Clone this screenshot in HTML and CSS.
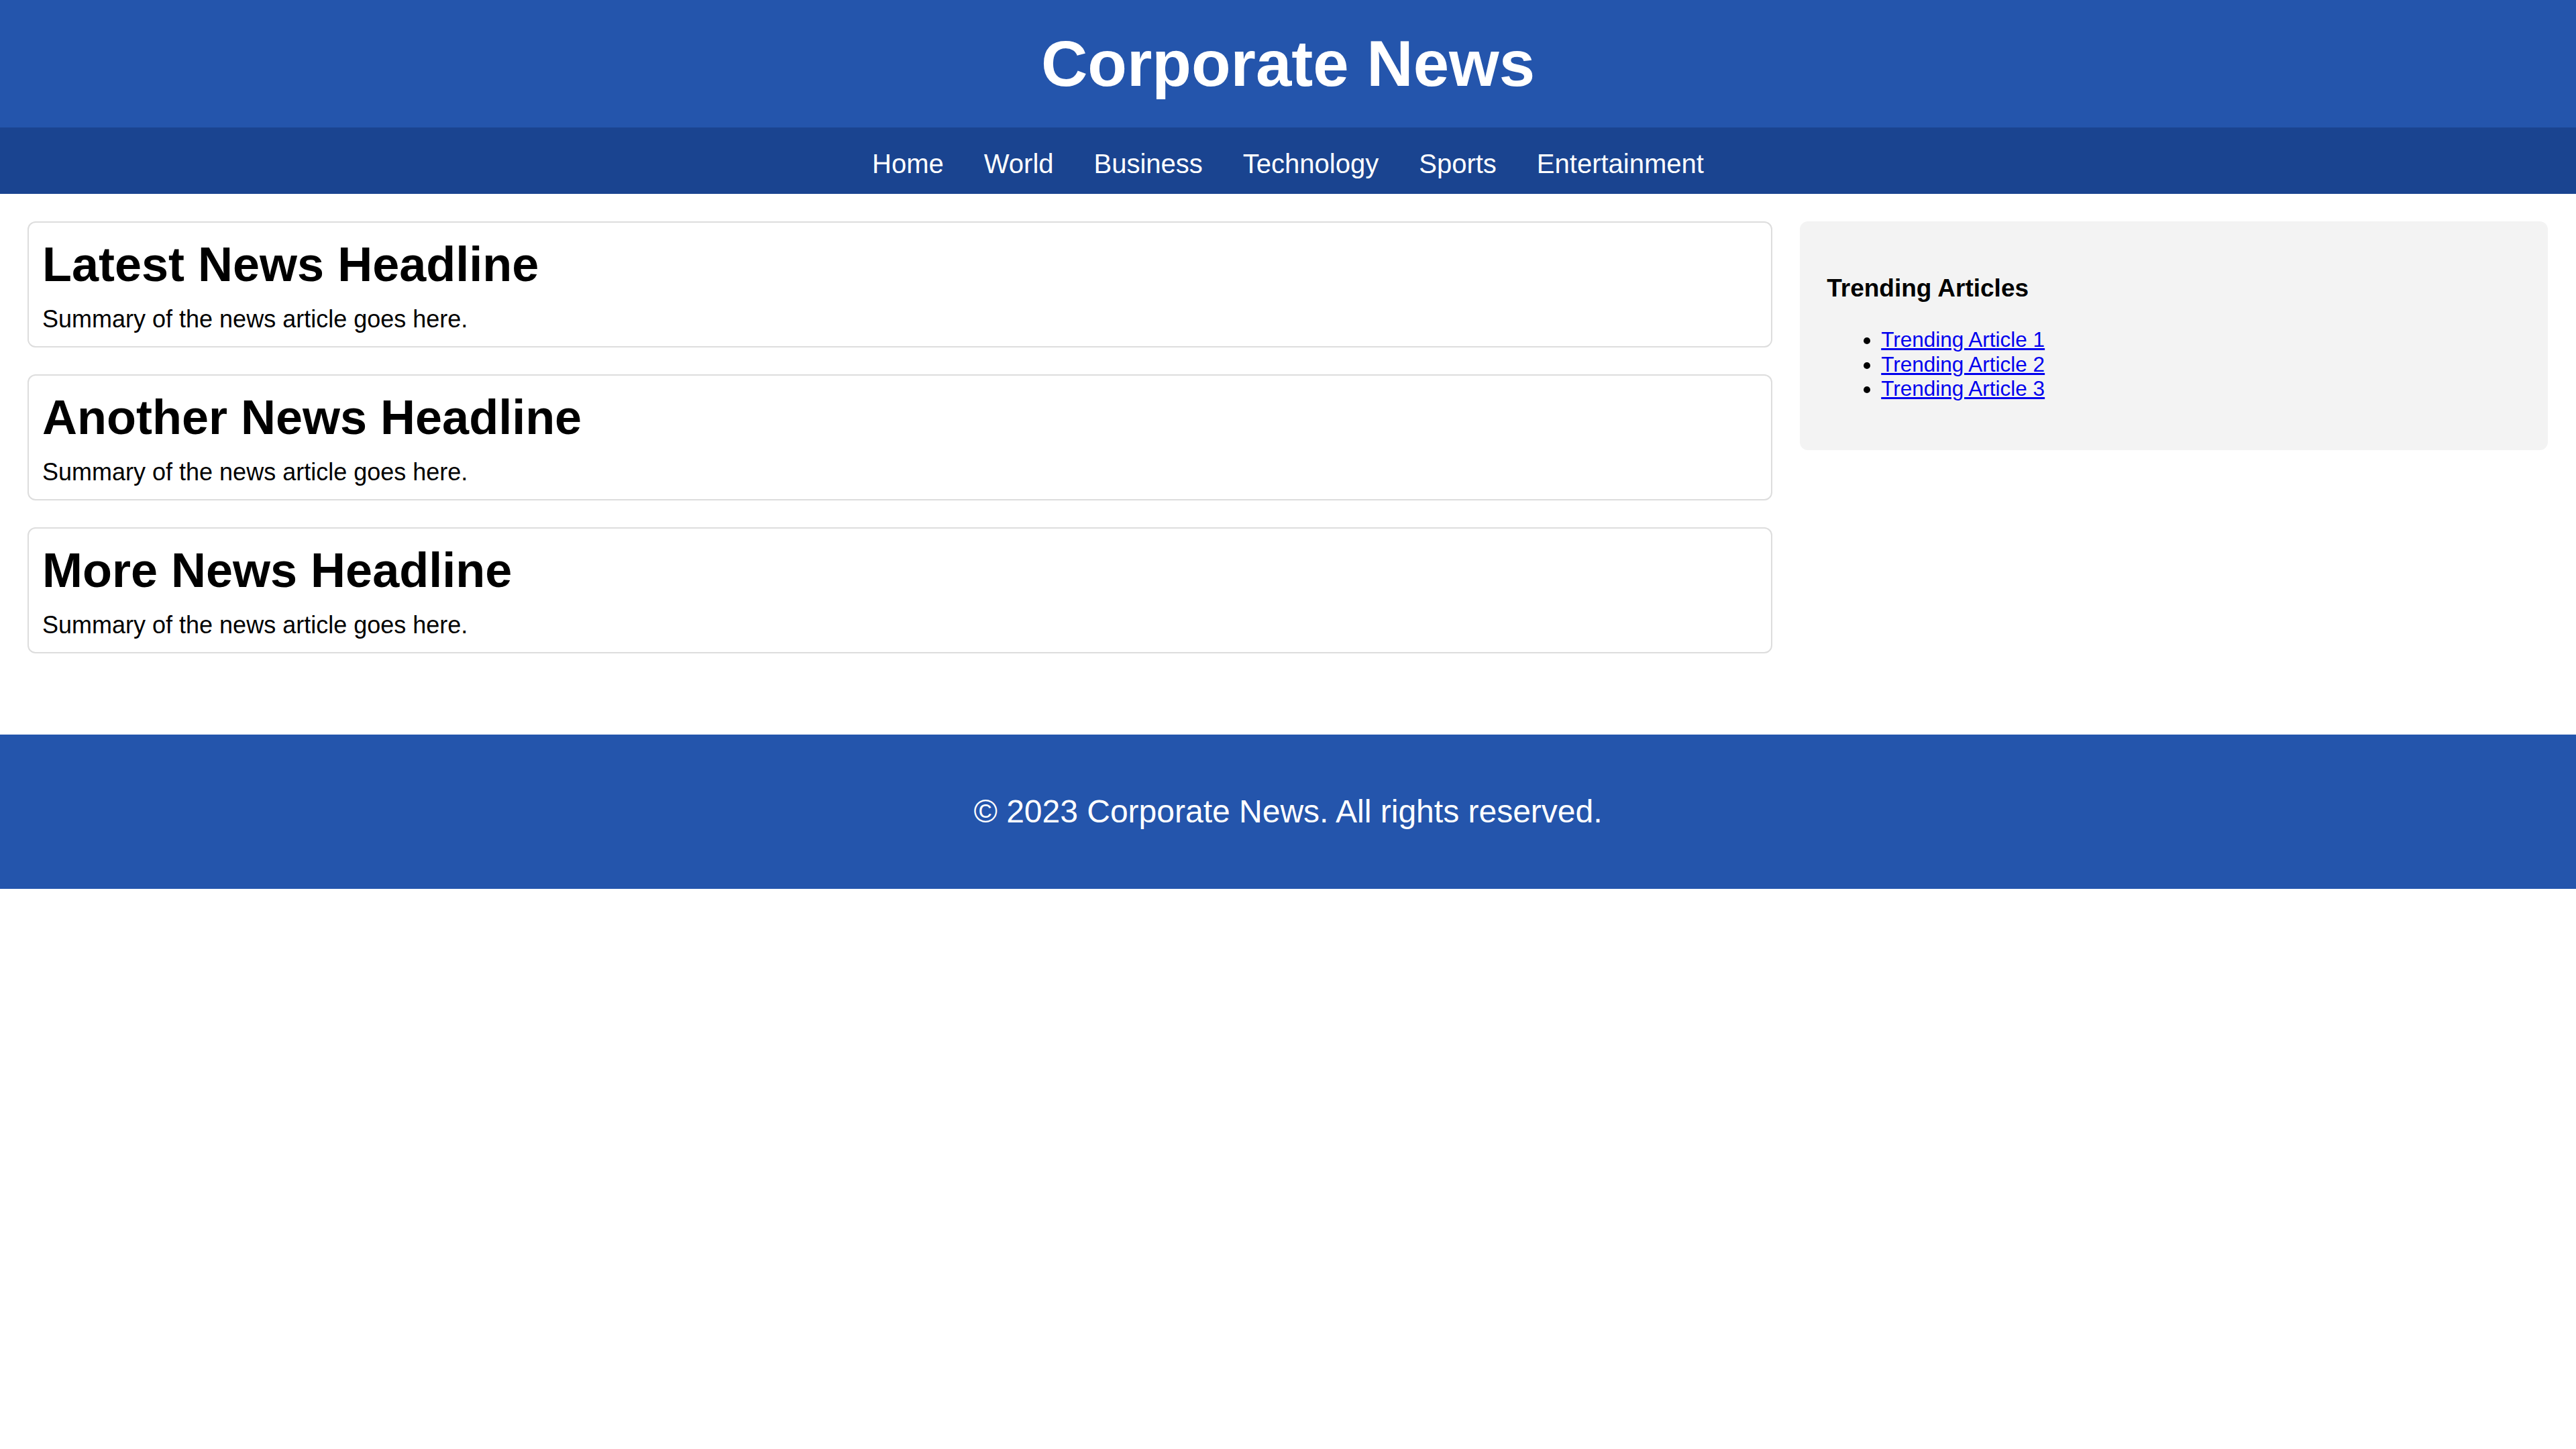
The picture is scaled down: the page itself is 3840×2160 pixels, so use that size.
FILE: index.html
```html
<!DOCTYPE html>
<html lang="en">
<head>
<meta charset="utf-8">
<title>Corporate News</title>
<link rel="stylesheet" href="styles.css">
</head>
<body>
<header class="site-header">
  <h1 class="site-title">Corporate News</h1>
</header>
<nav class="site-nav">
  <a class="nav-link" href="#">Home</a>
  <a class="nav-link" href="#">World</a>
  <a class="nav-link" href="#">Business</a>
  <a class="nav-link" href="#">Technology</a>
  <a class="nav-link" href="#">Sports</a>
  <a class="nav-link" href="#">Entertainment</a>
</nav>
<div class="layout">
  <main class="articles">
    <article class="card">
      <h2 class="card-title">Latest News Headline</h2>
      <p class="card-summary">Summary of the news article goes here.</p>
    </article>
    <article class="card">
      <h2 class="card-title">Another News Headline</h2>
      <p class="card-summary">Summary of the news article goes here.</p>
    </article>
    <article class="card">
      <h2 class="card-title">More News Headline</h2>
      <p class="card-summary">Summary of the news article goes here.</p>
    </article>
  </main>
  <aside class="sidebar">
    <h3 class="sidebar-title">Trending Articles</h3>
    <ul class="trending-list">
      <li><a class="trending-link" href="#">Trending Article 1</a></li>
      <li><a class="trending-link" href="#">Trending Article 2</a></li>
      <li><a class="trending-link" href="#">Trending Article 3</a></li>
    </ul>
  </aside>
</div>
<footer class="site-footer">
  <p class="footer-text">&copy; 2023 Corporate News. All rights reserved.</p>
</footer>
</body>
</html>
```
FILE: styles.css
```css
html, body {
  margin: 0;
  padding: 0;
  background: #ffffff;
}

body {
  font-family: "Liberation Sans", Arial, Helvetica, sans-serif;
  color: #000000;
}

.site-header {
  background: #2455ac;
  padding: 39px 0;
  text-align: center;
}

.site-title {
  margin: 0;
  color: #ffffff;
  font-size: 96px;
  font-weight: bold;
  line-height: 112px;
}

.site-nav {
  background: #1a4490;
  padding: 32px 0 22px;
  display: flex;
  justify-content: center;
  gap: 60px;
}

.nav-link {
  color: #ffffff;
  text-decoration: none;
  font-size: 40px;
  line-height: 45px;
}

.layout {
  display: grid;
  grid-template-columns: 7fr 3fr;
  align-items: start;
  column-gap: 41px;
  padding: 41px 42px 41px 41px;
}

.articles {
  min-width: 0;
  display: flex;
  flex-direction: column;
}

.card {
  border: 2px solid #dddddd;
  border-radius: 12px;
  padding: 21px 20px 19px;
  margin-bottom: 40px;
  background: #ffffff;
}

.card-title {
  margin: 0;
  font-size: 72px;
  font-weight: bold;
  line-height: 83px;
}

.card-summary {
  margin: 19px 0 0;
  font-size: 36px;
  line-height: 42px;
}

.sidebar {
  min-width: 0;
  background: #f3f3f3;
  border-radius: 12px;
  padding: 39px 39px 39px 40px;
}

.sidebar-title {
  margin: 39px 0 37px;
  font-size: 37px;
  font-weight: bold;
  line-height: 43px;
}

.trending-list {
  margin: 34px 0 34px;
  padding-left: 81px;
  list-style: disc;
  font-size: 31.5px;
  line-height: 36.6px;
}

.trending-link {
  color: #0000ee;
  text-decoration: underline;
}

.site-footer {
  background: #2455ac;
  padding: 41px 0;
  margin-top: 40px;
  text-align: center;
}

.footer-text {
  margin: 47px 0;
  color: #ffffff;
  font-size: 48px;
  line-height: 54px;
}
```
